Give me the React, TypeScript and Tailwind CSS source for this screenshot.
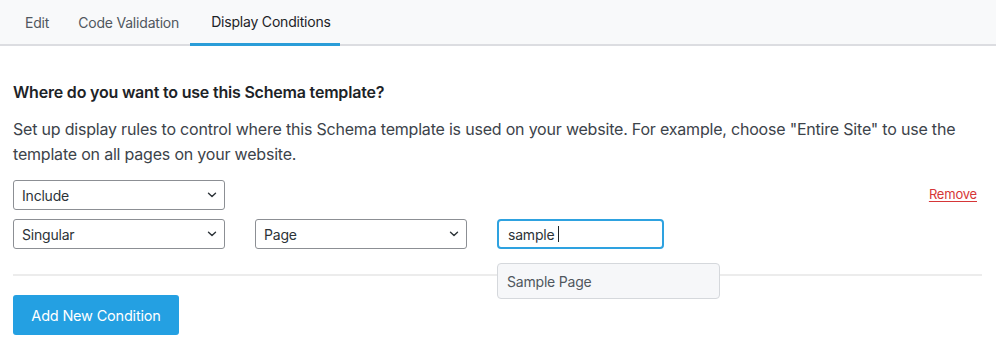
import React from 'react';

const Chevron = () => (
  <svg width="10" height="6" viewBox="0 0 10 6" fill="none" className="shrink-0">
    <path d="M1.5 1.2L5 4.5l3.5-3.3" stroke="#2c3338" strokeWidth="1.4" strokeLinecap="round" strokeLinejoin="round" />
  </svg>
);

const SelectBox = ({ label }: { label: string }) => (
  <div className="w-[212px] h-[30px] flex items-center justify-between pl-[8px] pr-[7px] border border-[#8c8f94] rounded-[3px] bg-white text-[14px] text-[#2c3338]">
    <span>{label}</span>
    <Chevron />
  </div>
);

const App: React.FC = () => {
  return (
    <div className="w-[996px] h-[349px] bg-white overflow-hidden tracking-[-0.2px] font-['Inter','Liberation_Sans',sans-serif]">
      {/* Tabs */}
      <div className="flex items-stretch h-[46px] bg-[#f8f9fa] border-b-2 border-[#dcdde1] pl-[10px] text-[14px]">
        <div className="flex items-center px-[15px] text-[#50575e]">Edit</div>
        <div className="flex items-center pl-[14px] pr-[11px] text-[#50575e]">Code Validation</div>
        <div className="flex items-center w-[150px] pl-[21px] -mb-[2px] border-b-[3px] border-[#2a9dd8] text-[#1d2327]">
          Display Conditions
        </div>
      </div>

      {/* Content */}
      <div className="pl-[13px] pr-[14px] pt-[34px]">
        <h2 className="text-[16px] leading-[24px] font-semibold text-[#1d2327]">
          Where do you want to use this Schema template?
        </h2>
        <p className="mt-[13px] text-[16px] leading-[25px] text-[#3c434a]">
          Set up display rules to control where this Schema template is used on your website. For example, choose "Entire Site" to use the template on all pages on your website.
        </p>

        <div className="mt-[13px] flex items-center justify-between">
          <SelectBox label="Include" />
          <a className="mr-[5px] text-[13px] text-[#d63638] underline underline-offset-2 cursor-pointer">Remove</a>
        </div>

        <div className="mt-[9px] flex items-center gap-[30px]">
          <SelectBox label="Singular" />
          <SelectBox label="Page" />
          <div className="relative">
            <div className="w-[167px] h-[30px] flex items-center pl-[9px] border-2 border-[#2ea2e0] rounded-[4px] text-[14px] text-[#2c3338]">
              <span>sample</span>
              <span className="ml-[4px] w-px h-[16px] bg-[#1d2327]" />
            </div>
            <div className="absolute left-0 top-[44px] z-10 w-[223px] h-[36px] flex items-center pl-[9px] bg-[#f6f7f9] border border-[#d5d8dc] rounded-[4px] text-[14px] text-[#50575e]">
              Sample Page
            </div>
          </div>
        </div>

        <div className="mt-[25px] border-t-2 border-[#ececec]" />

        <button className="mt-[19px] w-[166px] h-[40px] rounded-[3px] bg-[#24a0e2] text-white text-[14.5px] pt-[1px]">
          Add New Condition
        </button>
      </div>
    </div>
  );
};

export default App;
